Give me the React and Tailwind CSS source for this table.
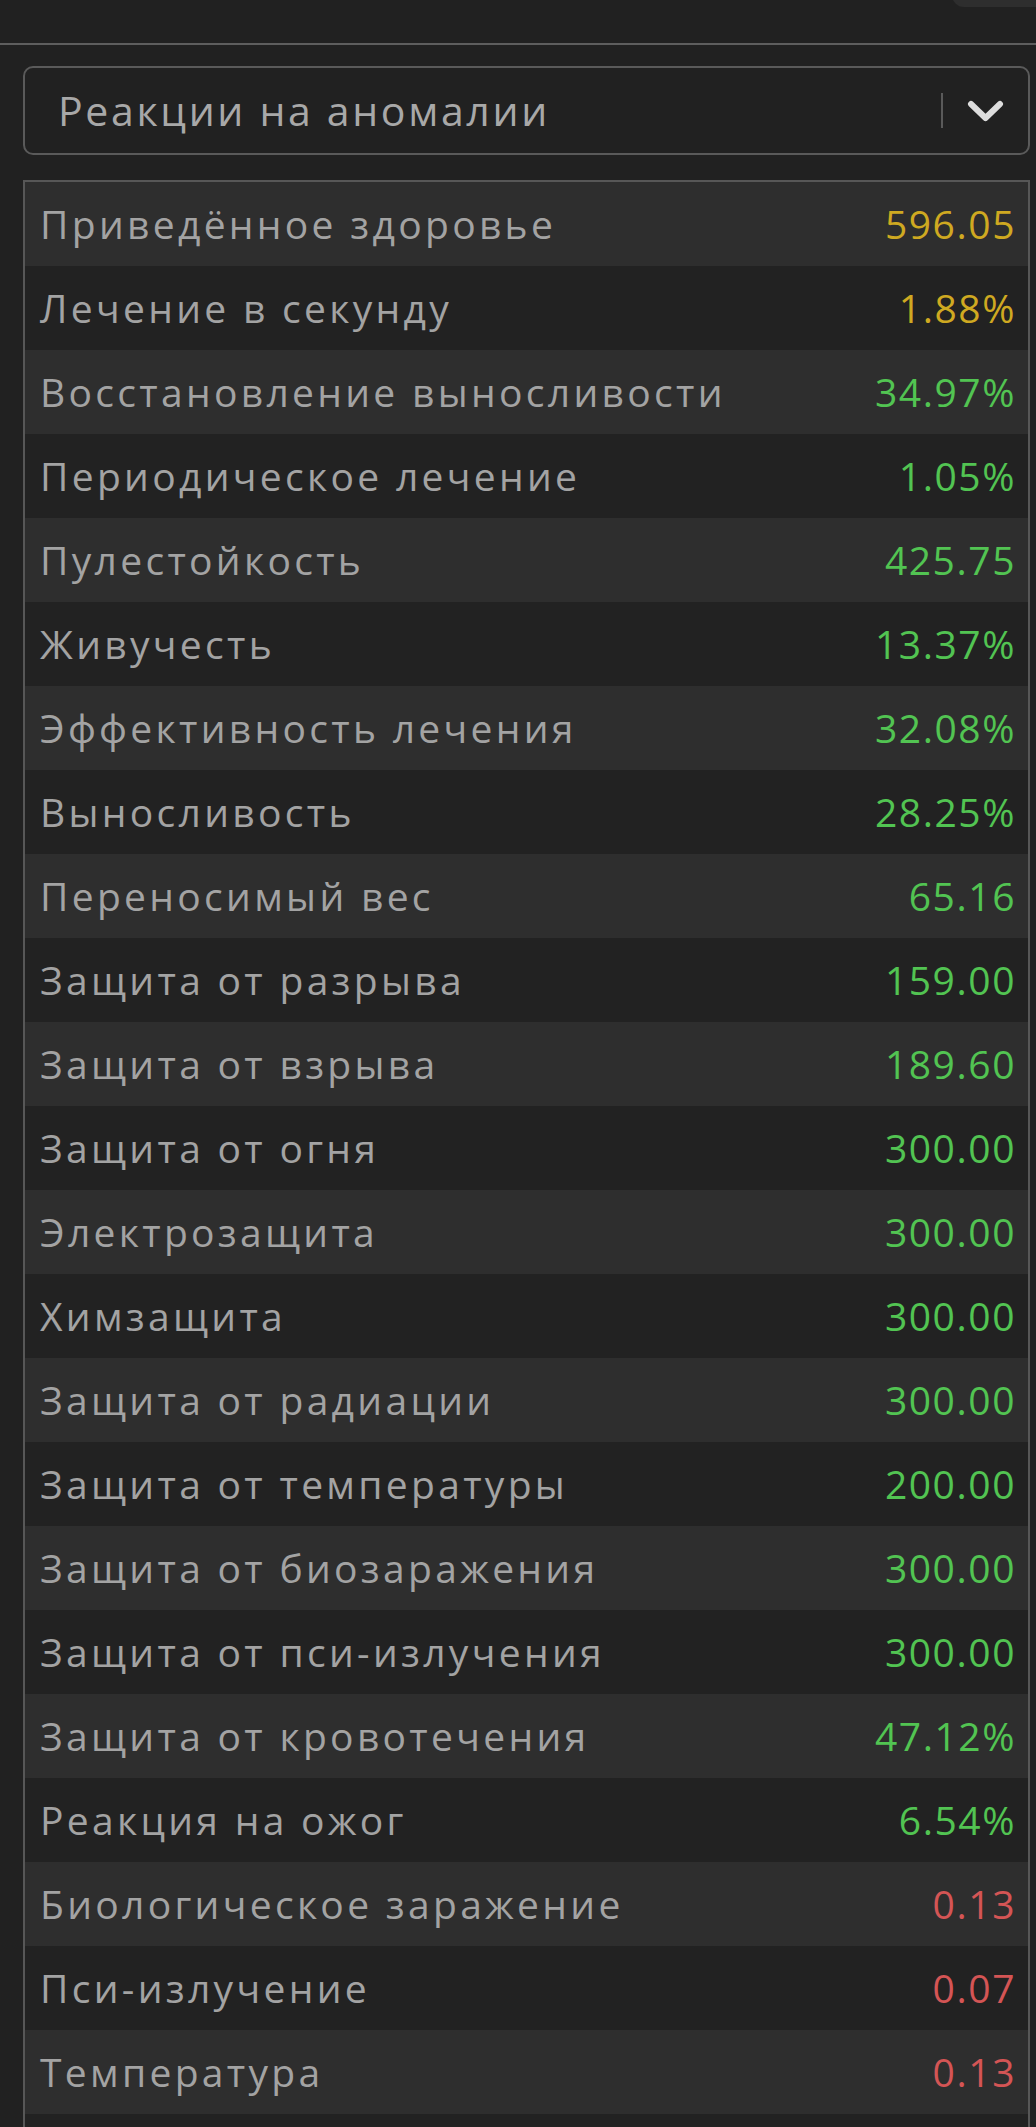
import React from "react";

const stats = [
  ["Приведённое здоровье", "596.05", "y"],
  ["Лечение в секунду", "1.88%", "y"],
  ["Восстановление выносливости", "34.97%", "g"],
  ["Периодическое лечение", "1.05%", "g"],
  ["Пулестойкость", "425.75", "g"],
  ["Живучесть", "13.37%", "g"],
  ["Эффективность лечения", "32.08%", "g"],
  ["Выносливость", "28.25%", "g"],
  ["Переносимый вес", "65.16", "g"],
  ["Защита от разрыва", "159.00", "g"],
  ["Защита от взрыва", "189.60", "g"],
  ["Защита от огня", "300.00", "g"],
  ["Электрозащита", "300.00", "g"],
  ["Химзащита", "300.00", "g"],
  ["Защита от радиации", "300.00", "g"],
  ["Защита от температуры", "200.00", "g"],
  ["Защита от биозаражения", "300.00", "g"],
  ["Защита от пси-излучения", "300.00", "g"],
  ["Защита от кровотечения", "47.12%", "g"],
  ["Реакция на ожог", "6.54%", "g"],
  ["Биологическое заражение", "0.13", "r"],
  ["Пси-излучение", "0.07", "r"],
  ["Температура", "0.13", "r"],
];

const valueColor = {
  y: "text-[#cfa921]",
  g: "text-[#52c452]",
  r: "text-[#d45555]",
};

function StatRow({ label, value, tone, odd }) {
  return (
    <div
      className={
        "h-[84px] flex items-center justify-between pl-[15px] pr-[12px] " +
        (odd ? "bg-[#2e2e2e]" : "bg-[#222222]")
      }
    >
      <span className="text-[#a3a3a3]">{label}</span>
      <span className={"tracking-[0.04em] " + valueColor[tone]}>{value}</span>
    </div>
  );
}

export default function App() {
  return (
    <div
      className="min-h-screen bg-[#212121] overflow-hidden text-[39px] tracking-[0.085em]"
      style={{ fontFamily: '"Open Sans", "Noto Sans", sans-serif' }}
    >
      {/* top bar */}
      <div className="h-[43px] flex justify-end">
        <div className="w-[84px] h-[40px] -mt-[33px] rounded-l-[12px] bg-[#2e2e2e]"></div>
      </div>
      <div className="h-[2px] bg-[#5e5e5e]"></div>

      <div className="pl-[23px] pr-[6px] pt-[21px]">
        {/* select */}
        <div className="h-[89px] border-2 border-[#5a5a5a] rounded-[10px] flex items-center pl-[33px] pr-[24px]">
          <span className="flex-1 text-[41px] tracking-[0.065em] text-[#a8a8a8]">Реакции на аномалии</span>
          <div className="w-[2px] h-[35px] bg-[#5a5a5a] mr-[24px]"></div>
          <svg width="37" height="22" viewBox="0 0 37 22" fill="none">
            <path
              d="M4 4 L18.5 18 L33 4"
              stroke="#dddddd"
              strokeWidth="6"
              strokeLinecap="round"
              strokeLinejoin="round"
            />
          </svg>
        </div>

        {/* stats table */}
        <div className="mt-[25px] border-2 border-[#575757] border-b-0">
          {stats.map(([label, value, tone], i) => (
            <StatRow key={label} label={label} value={value} tone={tone} odd={i % 2 === 0} />
          ))}
          <div className="h-[84px] bg-[#222222]"></div>
        </div>
      </div>
    </div>
  );
}
